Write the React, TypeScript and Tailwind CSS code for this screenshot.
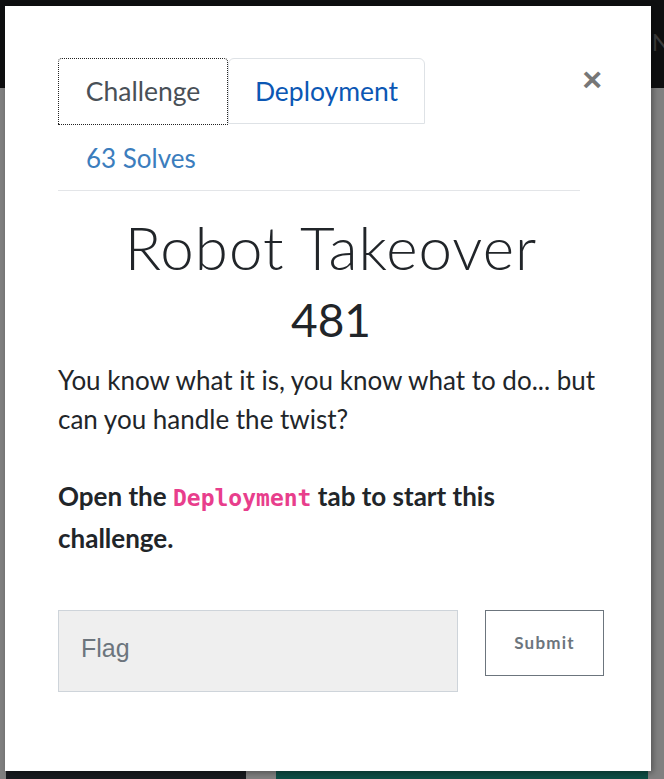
import React from 'react';

export default function App() {
  return (
    <div className="relative w-[664px] h-[779px] overflow-hidden bg-[#808080] font-['Lato',sans-serif]">
      {/* page behind the backdrop */}
      <div className="flex flex-col h-full">
        <div className="h-[88px] bg-[#0e0f10] flex justify-end items-center">
          <span className="text-[#3a3b3c] text-2xl mr-[-6px] mt-[-4px]">N</span>
        </div>
        <div className="flex-1" />
        <div className="h-[8px] flex">
          <div className="w-[6px]" />
          <div className="w-[240px] bg-[#171b1f]" />
          <div className="w-[30px]" />
          <div className="w-[372px] bg-[#0e4d45]" />
        </div>
      </div>

      {/* modal */}
      <div className="absolute left-[5px] top-[6px] w-[646px] h-[765px] bg-white shadow-[2px_2px_6px_rgba(0,0,0,0.35)] pl-[53px] pr-[47px] pt-[52px]">
        <div className="flex items-start">
          <div className="flex">
            <button className="h-[67px] w-[170px] border border-dotted border-[#222] rounded-t-[4px] text-[26.5px] text-[#495057] flex items-center justify-center">
              Challenge
            </button>
            <button className="h-[66px] w-[197px] border border-[#dee2e6] rounded-t-[6px] text-[26.5px] text-[#0b57b4] flex items-center justify-center pt-[2px]">
              Deployment
            </button>
          </div>
          <button className="ml-auto mt-[4px] mr-[2px] text-[34px] leading-none font-bold text-[#777] font-['Liberation_Sans',sans-serif]">
            ×
          </button>
        </div>
        <div className="w-[522px] border-b border-[#e3e5e8] pl-[28px] pt-[18px] pb-[17px] text-[26px] leading-[30px] text-[#3b7dbd]">
          63 Solves
        </div>

        <h2 className="w-[546px] text-center text-[60px] leading-[58px] font-light tracking-[1px] text-[#212529] mt-[27px]">
          Robot Takeover
        </h2>
        <h4 className="w-[546px] text-center text-[46px] leading-[50px] text-[#212529] mt-[19px]">
          481
        </h4>

        <p className="mt-[16px] text-[26px] leading-[39px] text-[#212529] w-[546px]">
          You know what it is, you know what to do... but can you handle the twist?
        </p>
        <p className="mt-[37px] text-[26px] leading-[40px] font-bold text-[#212529] w-[546px]">
          Open the <code className="font-['DejaVu_Sans_Mono',monospace] text-[23px] text-[#e83e8c]">Deployment</code> tab to start this challenge.
        </p>

        <div className="flex items-start mt-[52px]">
          <input
            placeholder="Flag"
            className="h-[82px] w-[400px] bg-[#efefef] border border-[#ced4da] px-[22px] pb-[6px] text-[25px] font-['Liberation_Sans',sans-serif] placeholder:text-[#6c757d] outline-none"
          />
          <button className="ml-[27px] h-[66px] w-[119px] border border-[#6c757d] text-[17px] font-bold tracking-[1.2px] text-[#6c757d]">
            Submit
          </button>
        </div>
      </div>
    </div>
  );
}
